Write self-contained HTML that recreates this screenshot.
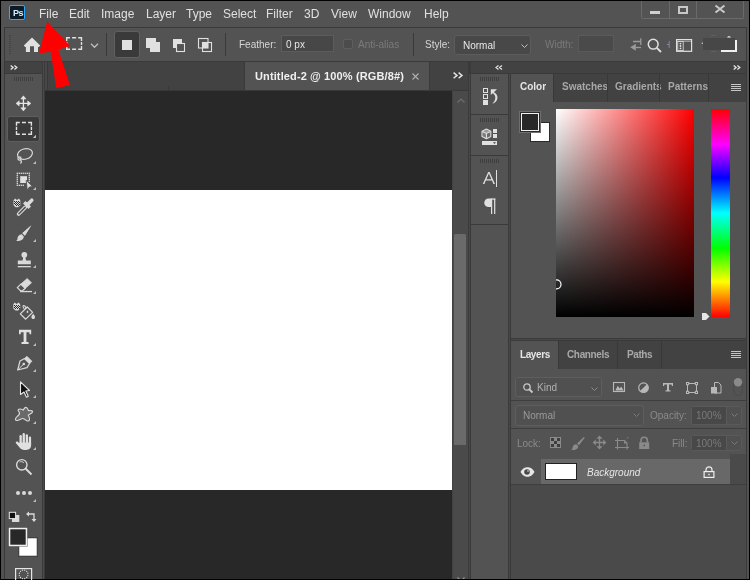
<!DOCTYPE html>
<html><head><meta charset="utf-8">
<style>
*{margin:0;padding:0;box-sizing:border-box}
html,body{width:750px;height:580px;overflow:hidden;background:#000}
body{position:relative;font-family:"Liberation Sans",sans-serif;color:#e0e0e0}
.a{position:absolute}
.t{position:absolute;white-space:nowrap;line-height:1;will-change:transform}
svg{position:absolute;overflow:visible}
</style></head><body>
<!-- frame -->
<div class="a" style="left:1px;top:1px;width:748px;height:578px;background:#535353"></div>

<!-- menu bar -->
<div class="a" style="left:9px;top:5px;width:16px;height:15px;background:#0b1c26;border:1px solid #31a8ff;border-radius:2px"></div>
<div class="t" style="left:12.5px;top:8.5px;font-size:9px;letter-spacing:-0.4px;color:#d8eefc;font-weight:bold">Ps</div>

<div class="t" style="left:39px;top:8px;font-size:12px">File</div>
<div class="t" style="left:69px;top:8px;font-size:12px">Edit</div>
<div class="t" style="left:101px;top:8px;font-size:12px">Image</div>
<div class="t" style="left:146px;top:8px;font-size:12px">Layer</div>
<div class="t" style="left:186px;top:8px;font-size:12px">Type</div>
<div class="t" style="left:223px;top:8px;font-size:12px">Select</div>
<div class="t" style="left:266px;top:8px;font-size:12px">Filter</div>
<div class="t" style="left:304px;top:8px;font-size:12px">3D</div>
<div class="t" style="left:331px;top:8px;font-size:12px">View</div>
<div class="t" style="left:368px;top:8px;font-size:12px">Window</div>
<div class="t" style="left:424px;top:8px;font-size:12px">Help</div>

<!-- window controls -->
<div class="a" style="left:641px;top:1px;width:103px;height:18px;border:1px solid #6a6a6a;border-top:none;border-radius:0 0 2px 2px"></div>
<div class="a" style="left:669px;top:1px;width:1px;height:17px;background:#6a6a6a"></div>
<div class="a" style="left:696px;top:1px;width:1px;height:17px;background:#6a6a6a"></div>
<div class="a" style="left:650px;top:11px;width:10px;height:3px;background:#cfcfcf"></div>
<div class="a" style="left:678px;top:6px;width:10px;height:8px;border:2px solid #c8c8c8"></div>
<svg style="left:715px;top:5px" width="10" height="8"><path d="M0.5 0.5L9.5 7.5M9.5 0.5L0.5 7.5" stroke="#c8c8c8" stroke-width="2"/></svg>

<!-- options bar -->
<div class="a" style="left:4px;top:27px;width:743px;height:35px;border:1px solid #3a3a3a;background:#535353"></div>
<div class="a" style="left:9px;top:35px;width:2px;height:19px;background:repeating-linear-gradient(to bottom,#444 0 1px,transparent 1px 2px)"></div>
<svg style="left:0;top:0" width="50" height="60"><path d="M32 37.6L40.2 45.6L38.9 47H38V52H34V46.2H30V52H25.9V47H25.1L23.8 45.6Z" fill="#e0e0e0"/></svg>
<svg style="left:0;top:0" width="120" height="60"><path d="M66.7 40.900000000000006V37.7H70.0 M72.1 37.7H76.1 M78.2 37.7H81.5V40.900000000000006 M66.7 46.099999999999994V49.3H70.0 M72.1 49.3H76.1 M78.2 49.3H81.5V46.099999999999994 M66.7 41.9V45.1 M81.5 41.9V45.1" fill="none" stroke="#e0e0e0" stroke-width="1.4"/><path d="M91 43.8L94.5 47.3L98 43.8" fill="none" stroke="#bdbdbd" stroke-width="1.3"/></svg>

<div class="a" style="left:106px;top:33px;width:1px;height:23px;background:#3a3a3a"></div>
<div class="a" style="left:114px;top:31px;width:26px;height:27px;background:#3a3a3a;border:1px solid #606060;border-radius:3px"></div>
<div class="a" style="left:122px;top:40px;width:10px;height:10px;background:#e0e0e0"></div>
<svg style="left:0;top:0" width="250" height="60">
<rect x="146" y="38" width="10" height="10" fill="#e0e0e0"/><rect x="150" y="42" width="10" height="10" fill="#e0e0e0"/>
<rect x="173" y="39" width="9" height="9" fill="#e0e0e0"/><rect x="176.5" y="43.5" width="8" height="8" fill="#535353" stroke="#e0e0e0" stroke-width="1.1"/>
<rect x="198.5" y="38.5" width="9.5" height="9.5" fill="none" stroke="#e0e0e0" stroke-width="1.1"/><rect x="202.5" y="42.5" width="9" height="9" fill="none" stroke="#e0e0e0" stroke-width="1.1"/><rect x="202.5" y="42.5" width="5.5" height="5.5" fill="#e0e0e0"/>
</svg>
<div class="a" style="left:225px;top:33px;width:1px;height:23px;background:#3a3a3a"></div>
<div class="t" style="left:239px;top:40px;font-size:10px;color:#d6d6d6">Feather:</div>
<div class="a" style="left:281px;top:35px;width:53px;height:17px;background:#474747;border:1px solid #5c5c5c"></div>
<div class="t" style="left:286px;top:40px;font-size:10px;color:#e6e6e6">0 px</div>
<div class="a" style="left:343px;top:39px;width:10px;height:10px;border:1px solid #5e5e5e;border-radius:2px;background:#4c4c4c"></div>
<div class="t" style="left:358px;top:40px;font-size:10px;color:#7a7a7a">Anti-alias</div>
<div class="a" style="left:413px;top:33px;width:1px;height:23px;background:#3a3a3a"></div>
<div class="t" style="left:425px;top:40px;font-size:10px;color:#d6d6d6">Style:</div>
<div class="a" style="left:454px;top:35px;width:77px;height:20px;background:#484848;border:1px solid #5c5c5c;border-radius:3px"></div>
<div class="t" style="left:463px;top:41px;font-size:10px;color:#e6e6e6">Normal</div>
<svg style="left:521px;top:44px" width="7" height="4"><path d="M0.5 0.5L3.5 3.5L6.5 0.5" fill="none" stroke="#bdbdbd" stroke-width="1"/></svg>
<div class="t" style="left:545px;top:40px;font-size:10px;color:#7a7a7a">Width:</div>
<div class="a" style="left:578px;top:35px;width:36px;height:17px;background:#4a4a4a;border:1px solid #5a5a5a"></div>
<svg style="left:0;top:0" width="750" height="60">
<path d="M633 41.5H640.5M640.8 38.2V45" fill="none" stroke="#9a9a9a" stroke-width="1.3"/>
<path d="M634.5 47.5H641" fill="none" stroke="#9a9a9a" stroke-width="1.3"/>
<path d="M630.2 47.3L635.8 43.8V50.8Z" fill="#9a9a9a"/>
<circle cx="653.2" cy="44.2" r="4.9" fill="none" stroke="#e0e0e0" stroke-width="1.5"/>
<path d="M656.8 47.8L661 52" stroke="#e0e0e0" stroke-width="1.8"/>
<path d="M669.2 41V48M667 44.5H669.2" fill="none" stroke="#7a8aa0" stroke-width="1"/>
<rect x="676.6" y="39.6" width="15" height="11.7" fill="none" stroke="#e0e0e0" stroke-width="1.2"/>
<path d="M676.6 41.3H691.6" stroke="#e0e0e0" stroke-width="0.6"/>
<rect x="677.8" y="41.6" width="5.4" height="9" fill="none" stroke="#e0e0e0" stroke-width="0.8"/>
<circle cx="680.5" cy="43.6" r="0.9" fill="#e0e0e0"/><circle cx="680.5" cy="46" r="0.9" fill="#e0e0e0"/><circle cx="680.5" cy="48.4" r="0.9" fill="#e0e0e0"/>
</svg>
<div class="a" style="left:703px;top:38px;width:32px;height:12px;background:#474747"></div>
<div class="a" style="left:721px;top:50px;width:16px;height:2px;background:#f0f0f0"></div><svg style="left:0;top:0" width="750" height="60"><path d="M727 37.6C727.5 36.6 728.3 36.2 729 36.2C729.7 36.2 730.5 36.6 731 37.6Z" fill="#f0f0f0"/><circle cx="702.3" cy="43.3" r="0.7" fill="#d0d0d0"/><path d="M711 35.3H716M711 51.5H716" stroke="#6a6a6a" stroke-width="0.6"/></svg>
<div class="a" style="left:735px;top:40px;width:2px;height:12px;background:#f0f0f0"></div>

<!-- left toolbar -->
<div class="a" style="left:1px;top:62px;width:3px;height:517px;background:#505050"></div>
<div class="a" style="left:4px;top:61px;width:1px;height:518px;background:#3a3a3a"></div>
<div class="a" style="left:5px;top:62px;width:37px;height:517px;background:#535353"></div>
<div class="a" style="left:5px;top:62px;width:37px;height:11px;background:#424242"></div><div class="a" style="left:5px;top:73px;width:37px;height:1px;background:#3a3a3a"></div>
<div class="a" style="left:42px;top:61px;width:1px;height:518px;background:#3a3a3a"></div>
<div class="a" style="left:43px;top:62px;width:1px;height:517px;background:#4a4a4a"></div><div class="a" style="left:44px;top:61px;width:1px;height:518px;background:#3a3a3a"></div>


<!-- toolbar header & tools -->
<svg style="left:9.6px;top:65.3px" width="8" height="5"><path d="M0.7 0.6L3.1 2.6L0.7 4.6M4.4 0.6L6.8 2.6L4.4 4.6" fill="none" stroke="#e6e6e6" stroke-width="1.3"/></svg>
<div class="a" style="left:14px;top:77px;width:20px;height:4px;background:repeating-linear-gradient(to right,#3f3f3f 0 1px,transparent 1px 2px)"></div>
<!-- move -->
<svg style="left:0;top:0" width="50" height="130"><path d="M23.4 98V109M18.5 103.4H28.5" stroke="#e6e6e6" stroke-width="1.3"/><path d="M23.4 95.8L26.0 99H20.799999999999997ZM23.4 111L26.0 107.8H20.799999999999997ZM16 103.4L19.2 100.80000000000001V106.0ZM30.9 103.4L27.7 100.80000000000001V106.0Z" fill="#e6e6e6" stroke="#e6e6e6" stroke-width="0.5" stroke-linejoin="round"/></svg>
<!-- marquee selected -->
<div class="a" style="left:7px;top:116px;width:33px;height:26px;background:#3a3a3a;border:1px solid #5e5e5e;border-radius:3px"></div>
<svg style="left:0;top:0" width="50" height="150"><path d="M16.5 125.7V122.5H19.8 M21.950000000000003 122.5H25.950000000000003 M28.1 122.5H31.400000000000002V125.7 M16.5 131.10000000000002V134.3H19.8 M21.950000000000003 134.3H25.950000000000003 M28.1 134.3H31.400000000000002V131.10000000000002 M16.5 126.80000000000001V130.0 M31.400000000000002 126.80000000000001V130.0" fill="none" stroke="#e0e0e0" stroke-width="1.4"/></svg>
<svg style="left:33px;top:135px" width="3" height="3"><path d="M3 0V3H0Z" fill="#bdbdbd"/></svg>

<!-- toolbar icons overlay -->
<svg style="left:0;top:0" width="50" height="580">
<g fill="#bdbdbd">
<path d="M36 135V138H33Z"/>
<path d="M36 161V164H33Z"/>
<path d="M36 187V190H33Z"/>
<path d="M36 239V242H33Z"/>
<path d="M36 265V268H33Z"/>
<path d="M36 291V294H33Z"/>
<path d="M36 343V346H33Z"/>
<path d="M36 369V372H33Z"/>
<path d="M36 395V398H33Z"/>
<path d="M36 421V424H33Z"/>
<path d="M36 447V450H33Z"/>
<path d="M36 499V502H33Z"/>
</g>
<g fill="none" stroke="#dadada" stroke-width="1.2">
<!-- lasso -->
<ellipse cx="25" cy="154" rx="7.6" ry="5.2" transform="rotate(-16 25 154)"/>
<circle cx="19.5" cy="158.5" r="1.6"/>
<path d="M20.5 160C21.5 161 21.5 162.5 20.5 163.5"/>
</g>
<!-- object select -->
<rect x="16.65" y="172.65" width="1.3" height="1.3" fill="#e0e0e0"/><rect x="18.65" y="172.65" width="1.3" height="1.3" fill="#e0e0e0"/><rect x="20.65" y="172.65" width="1.3" height="1.3" fill="#e0e0e0"/><rect x="22.65" y="172.65" width="1.3" height="1.3" fill="#e0e0e0"/><rect x="24.65" y="172.65" width="1.3" height="1.3" fill="#e0e0e0"/><rect x="26.65" y="172.65" width="1.3" height="1.3" fill="#e0e0e0"/><rect x="28.65" y="172.65" width="1.3" height="1.3" fill="#e0e0e0"/><rect x="16.65" y="184.65" width="1.3" height="1.3" fill="#e0e0e0"/><rect x="18.65" y="184.65" width="1.3" height="1.3" fill="#e0e0e0"/><rect x="20.65" y="184.65" width="1.3" height="1.3" fill="#e0e0e0"/><rect x="22.65" y="184.65" width="1.3" height="1.3" fill="#e0e0e0"/><rect x="16.65" y="174.65" width="1.3" height="1.3" fill="#e0e0e0"/><rect x="16.65" y="176.65" width="1.3" height="1.3" fill="#e0e0e0"/><rect x="16.65" y="178.65" width="1.3" height="1.3" fill="#e0e0e0"/><rect x="16.65" y="180.65" width="1.3" height="1.3" fill="#e0e0e0"/><rect x="16.65" y="182.65" width="1.3" height="1.3" fill="#e0e0e0"/><rect x="28.65" y="174.65" width="1.3" height="1.3" fill="#e0e0e0"/><rect x="28.65" y="176.65" width="1.3" height="1.3" fill="#e0e0e0"/><rect x="28.65" y="178.65" width="1.3" height="1.3" fill="#e0e0e0"/><rect x="28.65" y="180.65" width="1.3" height="1.3" fill="#e0e0e0"/>
<rect x="20.2" y="176.2" width="6.8" height="6.8" fill="#e0e0e0"/>
<path d="M26.2 180.3L32.6 186.6L29.4 187L27.3 190.4Z" fill="#e0e0e0" stroke="#535353" stroke-width="0.9" stroke-linejoin="round"/>
<!-- eyedropper -->
<path d="M13.5 200.5L15 198.5L17 200L19 198.5L20.3 200.5V205.5L18 207.2H15.5L13.5 205Z" fill="#dadada"/>
<g fill="#2a2a2a"><rect x="14" y="201" width="1" height="1"/><rect x="16" y="201" width="1" height="1"/><rect x="18" y="201" width="1" height="1"/><rect x="15" y="202" width="1" height="1"/><rect x="17" y="202" width="1" height="1"/><rect x="19" y="202" width="1" height="1"/><rect x="14" y="203" width="1" height="1"/><rect x="16" y="203" width="1" height="1"/><rect x="18" y="203" width="1" height="1"/><rect x="15" y="204" width="1" height="1"/><rect x="17" y="204" width="1" height="1"/><rect x="19" y="204" width="1" height="1"/><rect x="16" y="205" width="1" height="1"/><rect x="18" y="205" width="1" height="1"/></g>
<path d="M18.6 214L25.2 207.4" stroke="#dadada" stroke-width="3.7" stroke-linecap="round"/>
<path d="M18.9 213.7L25.2 207.4" stroke="#535353" stroke-width="1.5" stroke-linecap="round"/>
<path d="M23 203.5L28.5 209L31 206.5L25.5 201Z" fill="#dadada"/>
<path d="M27 205L31.8 200.2" stroke="#dadada" stroke-width="3.5" stroke-linecap="round"/>
<!-- brush -->
<path d="M31.2 225.5L24 234.5L22.5 233Z M31.2 225.5L25 235.5L23.5 234" fill="#dadada"/>
<path d="M31.3 225.3L22.3 233.2L24.8 235.7Z" fill="#dadada"/>
<path d="M21.8 234.2C19 234.2 17.5 236.5 17.5 238.5C17.5 240 16.5 240.8 16 241C19 241.5 23.5 240.5 23.8 236.5Z" fill="#dadada"/>
<!-- stamp -->
<circle cx="24.3" cy="254.8" r="2.9" fill="#dadada"/>
<path d="M23.3 256.5H25.3L26 260.5H30.8V264.3H17.8V260.5H22.6Z" fill="#dadada"/>
<rect x="17.8" y="266" width="13" height="1.3" fill="#dadada"/>
<!-- eraser -->
<path d="M27.2 278.4L31.6 282.8L25.2 288.5L20.8 284.1Z" fill="#dadada" stroke="#dadada" stroke-width="0.6" stroke-linejoin="round"/>
<path d="M20.9 284.1L25.2 288.4L21.2 291.4L17.3 287.6Z" fill="none" stroke="#dadada" stroke-width="1.3" stroke-linejoin="round"/>
<rect x="20" y="290.9" width="12" height="1.3" fill="#dadada"/>
<!-- bucket -->
<path d="M13.3 304.5L14.6 302.4L16.6 304L18.7 302.4L20.2 304.5V308.5L18 310.5H15.5L13.3 308.5Z" fill="#dadada"/>
<g fill="#2a2a2a"><rect x="14" y="305" width="1" height="1"/><rect x="16" y="305" width="1" height="1"/><rect x="18" y="305" width="1" height="1"/><rect x="15" y="306" width="1" height="1"/><rect x="17" y="306" width="1" height="1"/><rect x="19" y="306" width="1" height="1"/><rect x="14" y="307" width="1" height="1"/><rect x="16" y="307" width="1" height="1"/><rect x="18" y="307" width="1" height="1"/><rect x="15" y="308" width="1" height="1"/><rect x="17" y="308" width="1" height="1"/><rect x="19" y="308" width="1" height="1"/></g>
<path d="M27.3 307L32.6 312.3L25.7 319.2L20.3 313.9Z" fill="none" stroke="#dadada" stroke-width="1.2" stroke-linejoin="round"/>
<path d="M26.5 308.3C25.3 306.3 24 305 23.3 305.6C22.6 306.3 23.4 308.3 25 309.8" fill="none" stroke="#dadada" stroke-width="1.1"/>
<path d="M27.5 310.2C28.3 311.2 28.6 312 28.3 312.6C28 313.2 27 313.2 26.7 312.6C26.4 312 26.8 311.2 27.5 310.2Z" fill="#dadada"/>
<path d="M33.2 313.8C34.3 315.2 35 316.2 35 317.3C35 318.4 34.2 319.1 33.2 319.1C32.2 319.1 31.4 318.4 31.4 317.3C31.4 316.2 32.1 315.2 33.2 313.8Z" fill="#dadada"/>
<!-- type -->
<path d="M19 329.8H31.2V334.2H29.6L29.3 332.3H26.4V342.1H28.6V344H21.5V342.1H23.6V332.3H20.9L20.6 334.2H19Z" fill="#e0e0e0"/>
<!-- pen -->
<path d="M26.9 356.3L31.9 361.3L29.6 363.5L24.6 358.5Z" fill="#dadada" stroke="#dadada" stroke-width="0.8" stroke-linejoin="round"/>
<path d="M24.6 358.5L29.6 363.5L27 367.6L17.7 370L20 361Z" fill="none" stroke="#dadada" stroke-width="1.2" stroke-linejoin="round"/>
<path d="M18 369.7L23.3 364.4" stroke="#dadada" stroke-width="1"/>
<circle cx="23.8" cy="364" r="1.3" fill="#dadada"/>
<!-- path select -->
<path d="M20.5 381.8L29.5 390.5L25.8 391L28.3 396.2L26.5 397.2L24 392L20.5 394.5Z" fill="#111" stroke="#e6e6e6" stroke-width="1.1" stroke-linejoin="round"/>
<!-- custom shape -->
<path d="M18.3 409.6C19.5 408.3 21.6 409.3 23.2 410.1C24 408.9 24.6 407.3 26 407.4C27.5 407.5 27.8 409.5 28.5 410.6C30 410.5 32.6 410.3 32.6 411.8C32.6 413.3 30 414 28.3 415C28.6 416.5 30 418 29.5 419.8C29 421.3 27 421.5 25.8 420.2C24.5 419 23 418 21.5 418.8C19.5 419.8 17 421.5 15.8 420.2C14.8 419 16 417.5 17.5 416.2C19 415 20 413.5 19.3 412.3C18.8 411.5 17.5 410.8 18.3 409.6Z" fill="#6a6a6a" stroke="#dadada" stroke-width="1.1"/>
<!-- hand -->
<rect x="19.5" y="435" width="2.3" height="10" rx="1.15" fill="#e0e0e0"/>
<rect x="22.6" y="433" width="2.3" height="12" rx="1.15" fill="#e0e0e0"/>
<rect x="25.7" y="434.2" width="2.3" height="11" rx="1.15" fill="#e0e0e0"/>
<rect x="28.8" y="436.6" width="2.3" height="9" rx="1.15" fill="#e0e0e0"/>
<path d="M19.5 442.5H31.1V445.5C31.1 448.3 29.2 449.9 26.3 449.9H24.3C22.3 449.9 20.9 449.2 19.8 447.8L16 443.3C15.2 442.3 16.2 440.9 17.4 441.6L19.5 443.2Z" fill="#e0e0e0"/>
<!-- zoom -->
<circle cx="21.8" cy="464.8" r="5.2" fill="none" stroke="#dadada" stroke-width="1.4"/>
<path d="M25.5 468.5L31.5 474.5" stroke="#dadada" stroke-width="2"/>
<path d="M19.5 462C21 461.3 23 461.5 24 463" fill="none" stroke="#dadada" stroke-width="0.9"/>
<!-- dots -->
<circle cx="18" cy="493" r="2" fill="#dadada"/><circle cx="24" cy="493" r="2" fill="#dadada"/><circle cx="30" cy="493" r="2" fill="#dadada"/>
<!-- default colors -->
<rect x="12" y="515" width="7.3" height="7" fill="#dadada"/>
<rect x="9.3" y="512.3" width="6.3" height="6.3" fill="#111" stroke="#e6e6e6" stroke-width="1"/>
<!-- swap -->
<g fill="none" stroke="#dadada" stroke-width="1.3"><path d="M27.5 514H34V520"/></g>
<path d="M26 514L29 511.5V516.5Z M34 522L31.5 519H36.5Z" fill="#dadada"/>
<!-- fg/bg -->
<rect x="18.8" y="537.8" width="18.4" height="18.4" fill="#fff" stroke="#2a2a2a" stroke-width="0.9"/>
<rect x="8.5" y="527.5" width="19" height="19" fill="#2a2a2a"/>
<rect x="9.5" y="528.5" width="17" height="17" fill="#282828" stroke="#f0f0f0" stroke-width="1.6"/>
<!-- quick mask -->
<rect x="15.6" y="568.6" width="16" height="14" fill="none" stroke="#e6e6e6" stroke-width="1.2"/>
<circle cx="27.85" cy="575.54" r="0.65" fill="#e6e6e6"/><circle cx="26.71" cy="577.51" r="0.65" fill="#e6e6e6"/><circle cx="24.74" cy="578.65" r="0.65" fill="#e6e6e6"/><circle cx="22.46" cy="578.65" r="0.65" fill="#e6e6e6"/><circle cx="20.49" cy="577.51" r="0.65" fill="#e6e6e6"/><circle cx="19.35" cy="575.54" r="0.65" fill="#e6e6e6"/><circle cx="19.35" cy="573.26" r="0.65" fill="#e6e6e6"/><circle cx="20.49" cy="571.29" r="0.65" fill="#e6e6e6"/><circle cx="22.46" cy="570.15" r="0.65" fill="#e6e6e6"/><circle cx="24.74" cy="570.15" r="0.65" fill="#e6e6e6"/><circle cx="26.71" cy="571.29" r="0.65" fill="#e6e6e6"/><circle cx="27.85" cy="573.26" r="0.65" fill="#e6e6e6"/>
</svg>
<!-- document tab bar -->
<div class="a" style="left:45px;top:61px;width:423px;height:30px;background:#424242;border-top:1px solid #3a3a3a"></div><div class="a" style="left:45px;top:62px;width:2px;height:28px;background:#474747"></div><div class="a" style="left:47px;top:62px;width:1px;height:28px;background:#383838"></div>
<div class="a" style="left:244px;top:62px;width:1px;height:28px;background:#3a3a3a"></div><div class="a" style="left:245px;top:62px;width:184px;height:28px;background:#535353"></div><div class="a" style="left:429px;top:62px;width:1px;height:28px;background:#3a3a3a"></div><div class="a" style="left:45px;top:90px;width:423px;height:1px;background:#383838"></div>
<div class="t" style="left:255px;top:71px;font-size:11px;font-weight:bold;letter-spacing:0.12px;color:#f0f0f0">Untitled-2 @ 100% (RGB/8#)</div>
<svg style="left:411.5px;top:72.5px" width="7" height="7"><path d="M0.5 0.5L6.5 6.5M6.5 0.5L0.5 6.5" stroke="#b0b0b0" stroke-width="1.1"/></svg>
<svg style="left:453px;top:72px" width="11" height="7"><path d="M0.6 0.6L4 3.4L0.6 6.2M5.6 0.6L9 3.4L5.6 6.2" fill="none" stroke="#e6e6e6" stroke-width="1.4"/></svg>
<div class="a" style="left:168px;top:86px;width:1px;height:4px;background:#383838"></div>
<!-- doc area -->
<div class="a" style="left:45px;top:91px;width:407px;height:488px;background:#282828"></div>
<div class="a" style="left:45px;top:190px;width:407px;height:300px;background:#ffffff"></div>
<!-- scrollbar -->
<div class="a" style="left:452px;top:91px;width:16px;height:488px;background:#4a4a4a"></div>
<div class="a" style="left:452px;top:90px;width:1px;height:489px;background:#424242"></div><div class="a" style="left:454px;top:234px;width:12px;height:211px;background:#6a6a6a;border-radius:1.5px 1.5px 0 0"></div>

<svg style="left:457px;top:98px" width="8" height="5"><path d="M0.5 4.5L4 1L7.5 4.5" fill="none" stroke="#6e6e6e" stroke-width="1.2"/></svg>
<div class="a" style="left:456px;top:576px;width:10px;height:3px;overflow:hidden"><svg style="left:1px;top:1px" width="8" height="5"><path d="M0.5 0.5L4 4L7.5 0.5" fill="none" stroke="#9a9a9a" stroke-width="1.2"/></svg></div>
<!-- icon column -->
<div class="a" style="left:468px;top:62px;width:3px;height:517px;background:#3a3a3a"></div><div class="a" style="left:469px;top:74px;width:1px;height:505px;background:#484848"></div>
<div class="a" style="left:471px;top:62px;width:275px;height:11px;background:#424242"></div><div class="a" style="left:471px;top:73px;width:275px;height:1px;background:#3a3a3a"></div>
<div class="a" style="left:471px;top:74px;width:37px;height:505px;background:#535353"></div>
<div class="a" style="left:508px;top:74px;width:3px;height:505px;background:#3a3a3a"></div><div class="a" style="left:509px;top:74px;width:1px;height:505px;background:#484848"></div>

<!-- color panel -->
<div class="a" style="left:511px;top:74px;width:235px;height:264px;background:#535353"></div>
<div class="a" style="left:553px;top:74px;width:193px;height:28px;background:#424242"></div>
<div class="t" style="left:520px;top:82px;font-size:10px;font-weight:bold;color:#e6e6e6">Color</div>
<div class="t" style="left:562px;top:82px;font-size:10px;font-weight:bold;color:#a8a8a8">Swatches</div>
<div class="t" style="left:615px;top:82px;font-size:10px;font-weight:bold;color:#a8a8a8">Gradients</div>
<div class="t" style="left:668px;top:82px;font-size:10px;font-weight:bold;color:#a8a8a8">Patterns</div>
<div class="a" style="left:556px;top:109px;width:138px;height:208px;background:linear-gradient(to top,#000,rgba(0,0,0,0)),linear-gradient(to right,#fff,#f00)"></div>
<div class="a" style="left:711px;top:109px;width:19px;height:208px;background:linear-gradient(to bottom,#f00,#f0f 17%,#00f 33%,#0ff 50%,#0f0 67%,#ff0 83%,#f00)"></div>
<div class="a" style="left:746px;top:61px;width:1px;height:518px;background:#3a3a3a"></div>
<div class="a" style="left:747px;top:62px;width:2px;height:517px;background:#535353"></div>


<!-- icon column content -->
<svg style="left:495px;top:65px" width="8" height="5"><path d="M3.5 0.5L1 2.5L3.5 4.5M7 0.5L4.5 2.5L7 4.5" fill="none" stroke="#e6e6e6" stroke-width="1.2"/></svg>
<svg style="left:733px;top:65.3px" width="8" height="5"><path d="M0.7 0.6L3.1 2.6L0.7 4.6M4.4 0.6L6.8 2.6L4.4 4.6" fill="none" stroke="#e6e6e6" stroke-width="1.3"/></svg>
<div class="a" style="left:471px;top:114px;width:37px;height:1px;background:#3a3a3a"></div>
<div class="a" style="left:471px;top:155px;width:37px;height:1px;background:#3a3a3a"></div>
<div class="a" style="left:471px;top:224px;width:37px;height:1px;background:#3a3a3a"></div>
<div class="a" style="left:480px;top:77px;width:20px;height:4px;background:repeating-linear-gradient(to right,#3f3f3f 0 1px,transparent 1px 2px)"></div>
<div class="a" style="left:480px;top:118px;width:20px;height:4px;background:repeating-linear-gradient(to right,#3f3f3f 0 1px,transparent 1px 2px)"></div>
<div class="a" style="left:480px;top:159px;width:20px;height:4px;background:repeating-linear-gradient(to right,#3f3f3f 0 1px,transparent 1px 2px)"></div>
<svg style="left:0;top:0" width="750" height="580">
<!-- history -->
<rect x="483.5" y="88.5" width="4" height="4" fill="none" stroke="#e0e0e0" stroke-width="1"/>
<rect x="483.5" y="94.5" width="4" height="4" fill="none" stroke="#e0e0e0" stroke-width="1"/>
<rect x="483" y="100" width="5" height="5" fill="#e0e0e0"/>
<path d="M490.8 89.2L497 89.2L490.8 95Z" fill="#e0e0e0"/>
<path d="M493 91.8C496.3 93.2 497.8 95.5 497.4 98.5C497 101 495 103 492.3 103.8C494.3 101.8 495.3 99.8 495.3 97.5C495.3 95.5 494.2 94 492.3 93Z" fill="#e0e0e0"/>
<!-- 3d -->
<path d="M482.5 131.6L486.4 133.6V138.3L482.5 136.3Z" fill="#7a7a7a"/>
<path d="M490.3 131.6L486.4 133.6V138.3L490.3 136.3Z" fill="#6a6a6a"/>
<path d="M482.5 131.4L486.4 129.5L490.3 131.4L486.4 133.4Z" fill="#9a9a9a"/>
<path d="M486.4 129L490.8 131.2V136.6L486.4 138.8L482 136.6V131.2Z" fill="none" stroke="#e0e0e0" stroke-width="1.1" stroke-linejoin="round"/>
<path d="M482.2 131.4L486.4 133.5L490.6 131.4M486.4 133.5V138.6" fill="none" stroke="#e0e0e0" stroke-width="1.1"/>
<rect x="493" y="129" width="4" height="4" fill="#e0e0e0"/>
<rect x="493" y="134" width="4" height="4" fill="#e0e0e0"/>
<rect x="482" y="141" width="15" height="4" fill="#e0e0e0"/>
<path d="M493 142.2H496L494.5 143.9Z" fill="#444"/>
<!-- type A -->
<path d="M482.8 184L488.2 172H489.6L495 184H493.4L492 180.6H485.8L484.4 184ZM486.4 179.2H491.4L488.9 173.6Z" fill="#e0e0e0"/>
<rect x="496" y="170" width="1" height="17" fill="#e0e0e0"/>
<!-- pilcrow -->
<path d="M491.2 198.5V207H488.5A4.25 4.25 0 0 1 488.5 198.5Z" fill="#e0e0e0"/>
<rect x="491" y="198.5" width="4.3" height="1.2" fill="#e0e0e0"/>
<rect x="491" y="198.5" width="1.2" height="15.5" fill="#e0e0e0"/>
<rect x="494.1" y="198.5" width="1.2" height="15.5" fill="#e0e0e0"/>
</svg>

<!-- color panel details -->
<div class="a" style="left:519px;top:111px;width:22px;height:22px;background:#6e6e6e"></div>
<div class="a" style="left:530px;top:122px;width:20px;height:20px;background:#ffffff;border:1px solid #2a2a2a"></div>
<div class="a" style="left:519px;top:111px;width:22px;height:22px;border:1px solid #6e6e6e;background:#2a2a2a"></div>
<div class="a" style="left:521px;top:113px;width:18px;height:18px;border:1px solid #f0f0f0;background:#282828"></div>
<svg style="left:0;top:0" width="750" height="580">
<clipPath id="cf"><rect x="556" y="109" width="138" height="208"/></clipPath><circle cx="556.5" cy="284.3" r="4.5" fill="none" stroke="#fff" stroke-width="1.2" clip-path="url(#cf)"/>
<path d="M702 313H706L709.5 316.5L706 320H702Z" fill="#e6e6e6"/>
<g fill="#c4c4c4"><rect x="731" y="84" width="10" height="1"/><rect x="731" y="86" width="10" height="1"/><rect x="731" y="88" width="10" height="1"/><rect x="731" y="90" width="10" height="1"/></g>
<g fill="#c4c4c4"><rect x="731" y="351" width="10" height="1"/><rect x="731" y="353" width="10" height="1"/><rect x="731" y="355" width="10" height="1"/><rect x="731" y="357" width="10" height="1"/></g>
</svg>
<!-- layers panel -->
<div class="a" style="left:511px;top:338px;width:235px;height:3px;background:#3a3a3a"></div><div class="a" style="left:511px;top:339px;width:235px;height:1px;background:#484848"></div>
<div class="a" style="left:511px;top:341px;width:235px;height:238px;background:#535353"></div>
<div class="a" style="left:558px;top:341px;width:188px;height:28px;background:#424242"></div>
<div class="t" style="left:520px;top:349.5px;font-size:10px;font-weight:bold;letter-spacing:-0.4px;color:#e6e6e6">Layers</div>
<div class="t" style="left:567px;top:349.5px;font-size:10px;font-weight:bold;letter-spacing:-0.35px;color:#a8a8a8">Channels</div>
<div class="t" style="left:627px;top:349.5px;font-size:10px;font-weight:bold;letter-spacing:-0.4px;color:#a8a8a8">Paths</div>
<div class="a" style="left:511px;top:484px;width:235px;height:95px;background:#4a4a4a"></div>
<div class="a" style="left:541px;top:459px;width:189px;height:25px;background:#686868"></div>
<div class="t" style="left:587px;top:467.5px;font-size:10px;font-style:italic;color:#e6e6e6">Background</div>



<!-- layers content -->
<div class="a" style="left:558px;top:341px;width:1px;height:28px;background:#383838"></div><div class="a" style="left:617px;top:341px;width:1px;height:28px;background:#383838"></div>
<div class="a" style="left:661px;top:341px;width:1px;height:28px;background:#383838"></div>
<div class="a" style="left:553px;top:74px;width:1px;height:28px;background:#383838"></div>
<div class="a" style="left:607px;top:74px;width:1px;height:28px;background:#383838"></div>
<div class="a" style="left:659px;top:74px;width:1px;height:28px;background:#383838"></div>
<div class="a" style="left:708px;top:74px;width:1px;height:28px;background:#383838"></div>
<svg style="left:0;top:0" width="750" height="580">
<g fill="#c4c4c4"><rect x="731" y="351" width="10" height="1"/><rect x="731" y="353" width="10" height="1"/><rect x="731" y="355" width="10" height="1"/><rect x="731" y="357" width="10" height="1"/></g>
</svg>
<div class="a" style="left:515px;top:377px;width:87px;height:20px;border:1px solid #5e5e5e;border-radius:3px;background:#505050"></div>
<svg style="left:523px;top:383px" width="11" height="10"><circle cx="4" cy="4" r="3.2" fill="none" stroke="#c8c8c8" stroke-width="1.3"/><path d="M6.5 6.5L9.5 9.5" stroke="#c8c8c8" stroke-width="1.8"/></svg>
<div class="t" style="left:537px;top:382.5px;font-size:10px;color:#b0b0b0">Kind</div>
<svg style="left:591px;top:387px" width="7" height="4"><path d="M0.5 0.5L3.5 3.5L6.5 0.5" fill="none" stroke="#8a8a8a" stroke-width="1"/></svg>
<svg style="left:0;top:0" width="750" height="580">
<rect x="613.5" y="382.5" width="11" height="9" fill="none" stroke="#b8b8b8" stroke-width="1.1"/>
<path d="M615.3 390.5L617.8 385.8L619.7 388.6L621.2 386.6L623.7 390.5Z" fill="#b8b8b8"/>
<circle cx="643.5" cy="387.7" r="4.8" fill="none" stroke="#b8b8b8" stroke-width="1.2"/>
<path d="M647 384.3A4.8 4.8 0 0 1 640 391.1Z" fill="#b8b8b8"/>
<path d="M663 383H673V386H672L671.5 384.5H669V390.3H670.5V391.6H665.5V390.3H667V384.5H664.5L664 386H663Z" fill="#b8b8b8"/>
<rect x="687.5" y="383.5" width="9" height="9" fill="none" stroke="#b8b8b8" stroke-width="1"/>
<g fill="#535353" stroke="#b8b8b8" stroke-width="1"><rect x="686.5" y="382.5" width="2.2" height="2.2"/><rect x="695.3" y="382.5" width="2.2" height="2.2"/><rect x="686.5" y="391.3" width="2.2" height="2.2"/><rect x="695.3" y="391.3" width="2.2" height="2.2"/></g>
<path d="M714.5 382.5H718.5L721 385V393H714.5Z" fill="none" stroke="#b8b8b8" stroke-width="1"/>
<rect x="711" y="387" width="6" height="6.5" fill="#b8b8b8"/>
<rect x="733.6" y="380" width="8.8" height="15.5" rx="4.4" fill="none" stroke="#4a4a4a" stroke-width="1"/>
<circle cx="738" cy="382.3" r="4.2" fill="#8a8a8a"/>
</svg>
<div class="a" style="left:511px;top:400px;width:235px;height:1px;background:#3e3e3e"></div>
<div class="a" style="left:515px;top:405px;width:129px;height:21px;border:1px solid #5e5e5e;border-radius:3px;background:#505050"></div>
<div class="t" style="left:523px;top:410.5px;font-size:10px;color:#9a9a9a">Normal</div>
<svg style="left:633px;top:413px" width="7" height="4"><path d="M0.5 0.5L3.5 3.5L6.5 0.5" fill="none" stroke="#7a7a7a" stroke-width="1"/></svg>
<div class="t" style="left:650px;top:410.5px;font-size:10px;color:#8a8a8a">Opacity:</div>
<div class="a" style="left:691px;top:406px;width:51px;height:19px;border:1px solid #5a5a5a;border-radius:3px;background:#505050"></div>
<div class="a" style="left:692px;top:407px;width:34px;height:17px;background:#484848"></div>
<div class="a" style="left:726px;top:407px;width:1px;height:17px;background:#5a5a5a"></div>
<div class="t" style="left:695.5px;top:410.5px;font-size:10px;color:#7a7a7a">100%</div>
<svg style="left:731px;top:413px" width="7" height="4"><path d="M0.5 0.5L3.5 3.5L6.5 0.5" fill="none" stroke="#7a7a7a" stroke-width="1"/></svg>
<div class="a" style="left:511px;top:428px;width:235px;height:1px;background:#3e3e3e"></div>
<div class="t" style="left:517px;top:439px;font-size:10px;color:#8a8a8a">Lock:</div>
<svg style="left:0;top:0" width="750" height="580">
<rect x="550.5" y="437.5" width="10" height="10" fill="none" stroke="#8a8a8a" stroke-width="1"/>
<rect x="551" y="438" width="9" height="9" fill="#8a8a8a"/>
<g fill="#3e3e3e"><rect x="551" y="438" width="3" height="3"/><rect x="557" y="438" width="3" height="3"/><rect x="554" y="441" width="3" height="3"/><rect x="551" y="444" width="3" height="3"/><rect x="557" y="444" width="3" height="3"/></g>
<path d="M583.5 437.2C584.3 436.8 584.8 437.4 584.5 438.1L579 445.3L577 443.5Z" fill="#8a8a8a"/>
<path d="M576.3 444.2C574 444.2 572.8 446 572.6 447.7C572.5 448.8 572 449.5 571.2 449.9C574 450.5 578 449.5 578.3 446.2Z" fill="#8a8a8a"/>
<path d="M599.5 437V448M594 442.5H605" stroke="#8a8a8a" stroke-width="1.3"/>
<path d="M599.5 435.6L602.6 438.8H596.4ZM599.5 449.4L602.6 446.2H596.4ZM592.6 442.5L595.8 439.4V445.6ZM606.4 442.5L603.2 439.4V445.6Z" fill="#8a8a8a"/>
<path d="M617.5 438V449.5M615 440.5H624.5L627 443V449.5M615 447.5H629" fill="none" stroke="#8a8a8a" stroke-width="1.1"/>
<path d="M624 440.5V443.5H627Z" fill="#8a8a8a"/>
<path d="M627 438.5L628.5 437" stroke="#8a8a8a" stroke-width="0.9"/>
<path d="M641 442.5V440.5A3.2 3.2 0 0 1 647.4 440.5V442.5" fill="none" stroke="#8a8a8a" stroke-width="1.6"/>
<rect x="639.2" y="442.3" width="10" height="6.7" fill="#8a8a8a"/>
<rect x="643.5" y="444.7" width="1.5" height="1.5" fill="#535353"/>
</svg>
<div class="t" style="left:671.5px;top:439px;font-size:10px;color:#8a8a8a">Fill:</div>
<div class="a" style="left:691px;top:435px;width:51px;height:16px;border:1px solid #5a5a5a;border-radius:3px;background:#505050"></div>
<div class="a" style="left:692px;top:436px;width:34px;height:14px;background:#484848"></div>
<div class="a" style="left:726px;top:436px;width:1px;height:14px;background:#5a5a5a"></div>
<div class="t" style="left:695.5px;top:439px;font-size:10px;color:#7a7a7a">100%</div>
<svg style="left:731px;top:441px" width="7" height="4"><path d="M0.5 0.5L3.5 3.5L6.5 0.5" fill="none" stroke="#7a7a7a" stroke-width="1"/></svg>
<div class="a" style="left:730px;top:454px;width:16px;height:30px;background:#4a4a4a"></div>
<div class="a" style="left:511px;top:484px;width:235px;height:1px;background:#3e3e3e"></div>
<svg style="left:519.5px;top:467.3px" width="15" height="10"><path d="M0.5 5C3 1 5 0.3 7.5 0.3C10 0.3 12 1 14.5 5C12 9 10 9.7 7.5 9.7C5 9.7 3 9 0.5 5Z" fill="#e6e6e6"/><circle cx="7" cy="5" r="2.8" fill="#484848"/><circle cx="8" cy="4" r="0.8" fill="#e6e6e6"/></svg>
<div class="a" style="left:545px;top:463px;width:32px;height:17px;background:#fff;border:1px solid #222"></div>
<svg style="left:703px;top:466px" width="12" height="12"><path d="M3 5.5V3.8A3 3 0 0 1 9 3.8V5.5" fill="none" stroke="#f0f0f0" stroke-width="1.2"/><rect x="1.1" y="5.6" width="9.8" height="5.8" fill="none" stroke="#f0f0f0" stroke-width="1.2"/><rect x="5.3" y="7.8" width="1.4" height="1.4" fill="#f0f0f0"/></svg>
<!-- red arrow -->
<svg style="left:0;top:0" width="750" height="580"><path d="M47.2 21.2L70 46L58.3 49.5L70 85.3L56.2 88.1L50.7 51.6L39 53.6Z" fill="#ff0000"/></svg>
</body></html>
